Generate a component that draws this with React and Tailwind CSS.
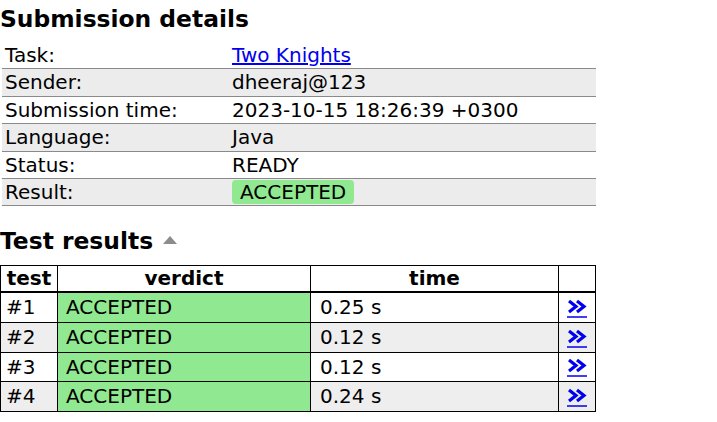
import React from 'react';

const details = [
  { label: 'Task:', value: <a href="#" className="text-[#0000ee] underline">Two Knights</a> },
  { label: 'Sender:', value: 'dheeraj@123' },
  { label: 'Submission time:', value: '2023-10-15 18:26:39 +0300' },
  { label: 'Language:', value: 'Java' },
  { label: 'Status:', value: 'READY' },
  {
    label: 'Result:',
    value: <span className="inline-block rounded-[4px] bg-[#90e890] px-[8px] leading-[24px]">ACCEPTED</span>,
  },
];

const tests = [
  { id: '#1', verdict: 'ACCEPTED', time: '0.25 s' },
  { id: '#2', verdict: 'ACCEPTED', time: '0.12 s' },
  { id: '#3', verdict: 'ACCEPTED', time: '0.12 s' },
  { id: '#4', verdict: 'ACCEPTED', time: '0.24 s' },
];

// double chevron link icon
const Next = () => (
  <a href="#" className="inline-block align-middle">
    <svg width="21" height="20" viewBox="0 0 21 20">
      <path d="M2 2 L9 7.5 L2 13" fill="none" stroke="#0000ee" strokeWidth="3.2" />
      <path d="M10 2 L17 7.5 L10 13" fill="none" stroke="#0000ee" strokeWidth="3.2" />
      <line x1="0" y1="18" x2="20" y2="18" stroke="#0000ee" strokeWidth="1.5" />
    </svg>
  </a>
);

export default function App() {
  return (
    <div className="min-h-[422px] w-[717px] bg-white text-black font-['DejaVu_Sans',sans-serif] text-[20px]">
      <h2 className="pt-[4px] text-[23.4px] font-bold leading-[30px]">Submission details</h2>

      {/* details */}
      <table className="ml-[2px] mt-[8px] w-[594px] border-collapse">
        <tbody>
          {details.map((d, i) => (
            <tr key={d.label} className={`${i % 2 ? 'bg-[#ececec]' : ''} border-b border-[#8a8a8a]`}>
              <td className="w-[227px] px-[3px] py-0 leading-[26.4px] align-middle">{d.label}</td>
              <td className="px-[3px] py-0 leading-[26.4px] align-middle">{d.value}</td>
            </tr>
          ))}
        </tbody>
      </table>

      <h2 className="mt-[20px] flex items-center gap-[10px] text-[23.4px] font-bold leading-[30px]">
        Test results
        <svg width="14" height="8" viewBox="0 0 14 8" className="mt-[-2px]">
          <polygon points="7,0 14,8 0,8" fill="#8c8c8c" />
        </svg>
      </h2>

      <table className="mt-[9px] w-[596px] border-collapse border border-black">
        <thead>
          <tr className="border-b-2 border-black">
            <th className="w-[57px] border-r border-black py-0 leading-[25px]">test</th>
            <th className="w-[253px] border-r border-black py-0 leading-[25px]">verdict</th>
            <th className="w-[248px] border-r border-black py-0 leading-[25px]">time</th>
            <th className="py-0"></th>
          </tr>
        </thead>
        <tbody>
          {tests.map((t, i) => (
            <tr key={t.id} className={`border-b border-black ${i % 2 ? 'bg-[#eeeeee]' : ''}`}>
              <td className="border-r border-black px-[5px] py-0 leading-[28.6px]">{t.id}</td>
              <td className="border-r border-black bg-[#90e890] px-[8px] py-0 leading-[28.6px]">{t.verdict}</td>
              <td className="border-r border-black px-[9px] py-0 leading-[28.6px]">{t.time}</td>
              <td className="py-0 text-center leading-[28.6px]">
                <Next />
              </td>
            </tr>
          ))}
        </tbody>
      </table>
    </div>
  );
}
